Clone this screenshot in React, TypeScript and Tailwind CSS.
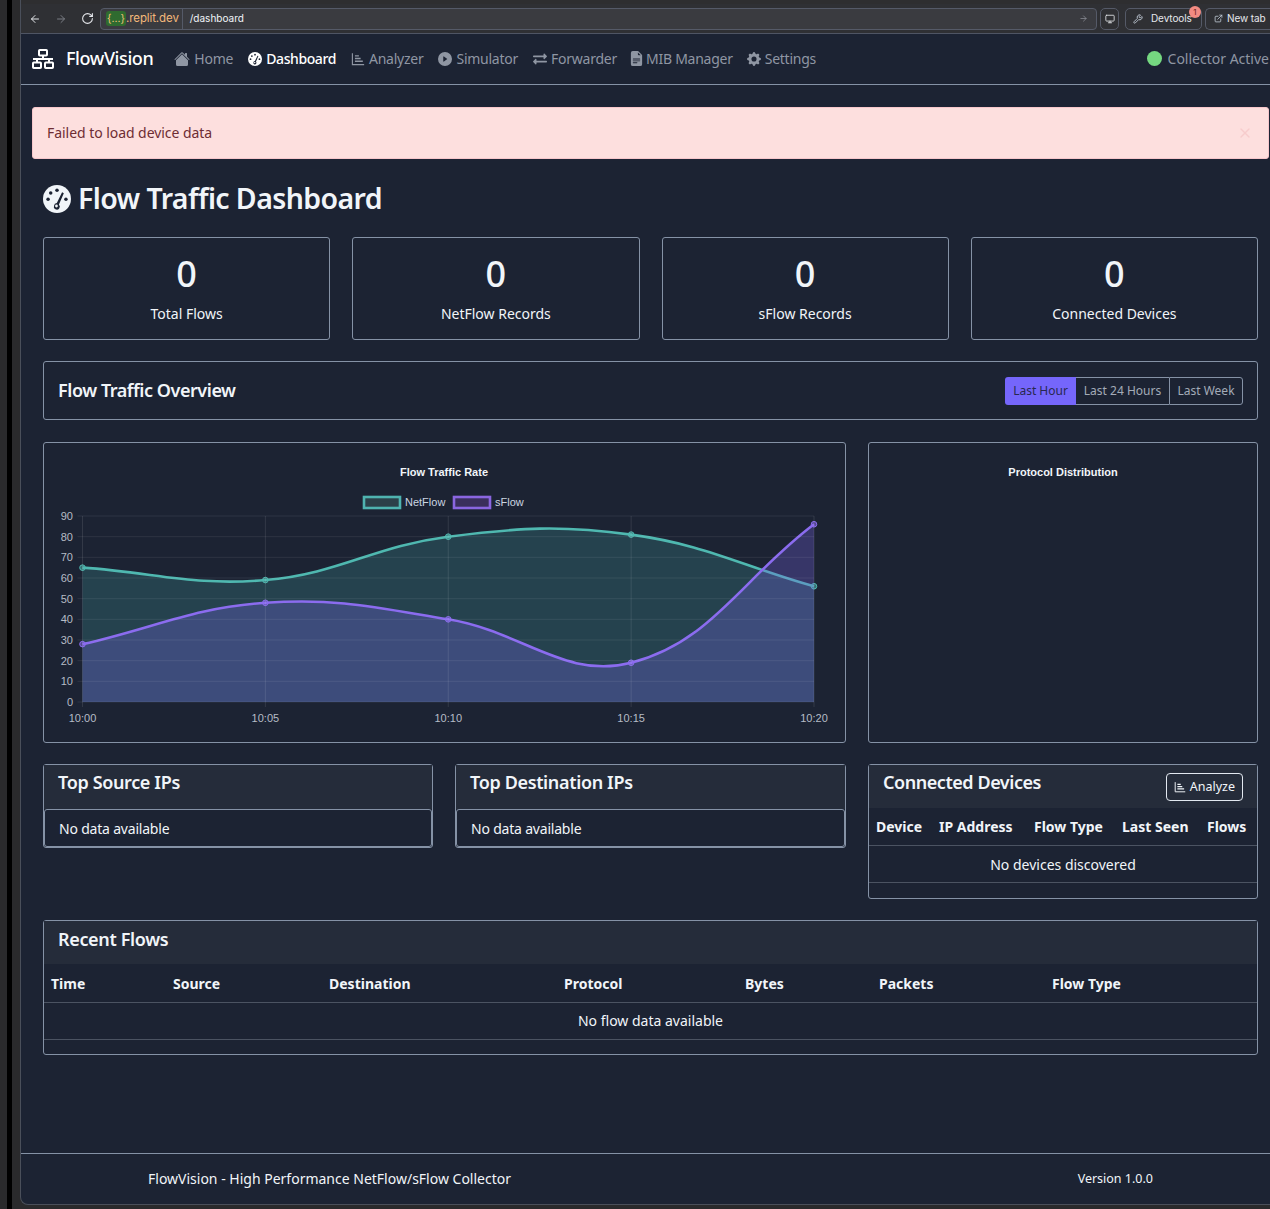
import type { ComponentType, ReactNode } from "react";
import { ArrowLeft, ArrowRight, ExternalLink, Monitor, RotateCw, Wrench, X } from "lucide-react";
import { BsFileEarmarkTextFill, BsGearFill, BsHouseFill, BsPlayCircleFill } from "react-icons/bs";
import { FaExchangeAlt } from "react-icons/fa";

function GaugeIcon({ className }: { className?: string }) {
  return (
    <svg viewBox="0 0 16 16" className={className}>
      <circle cx="8" cy="8" r="8" fill="currentColor" />
      <g fill="#1c2333">
        <circle cx="8" cy="3" r="1" />
        <circle cx="4.4" cy="4.6" r="1" />
        <circle cx="2.9" cy="8.2" r="1" />
        <circle cx="13.1" cy="8.2" r="1" />
        <path d="M10.9 4.2 L11.9 4.7 L9.1 11.2 A1.7 1.7 0 1 1 6.3 11.8 A1.7 1.7 0 0 1 7.9 10.3 Z" />
      </g>
      <circle cx="7.7" cy="12" r="0.8" fill="currentColor" />
    </svg>
  );
}

function StepsIcon({ className }: { className?: string }) {
  return (
    <svg viewBox="0 0 16 16" fill="none" stroke="currentColor" strokeWidth="1.3" className={className}>
      <path d="M1.6 1.5 V14.4 H15" />
      <path d="M4.5 4.4 H9 M4.5 7.4 H11 M4.5 10.6 H13.5" strokeWidth="1.6" />
    </svg>
  );
}

function LogoIcon({ className }: { className?: string }) {
  return (
    <svg viewBox="0 0 22 20" fill="none" stroke="currentColor" strokeWidth="2" className={className}>
      <rect x="7" y="1" width="8" height="5.5" rx="0.8" />
      <rect x="1" y="13.5" width="8" height="5.5" rx="0.8" />
      <rect x="13" y="13.5" width="8" height="5.5" rx="0.8" />
      <path d="M11 6.5 V10 M1 10 H21 M5 10 V13.5 M17 10 V13.5" />
    </svg>
  );
}

const navItems: { icon: ComponentType<{ className?: string }>; label: string; active: boolean; size: string }[] = [
  { icon: BsHouseFill, label: "Home", active: false, size: "h-[16px] w-[16px]" },
  { icon: GaugeIcon, label: "Dashboard", active: true, size: "h-[14px] w-[14px]" },
  { icon: StepsIcon, label: "Analyzer", active: false, size: "h-[14px] w-[14px]" },
  { icon: BsPlayCircleFill, label: "Simulator", active: false, size: "h-[14px] w-[14px]" },
  { icon: FaExchangeAlt, label: "Forwarder", active: false, size: "h-[14px] w-[14px]" },
  { icon: BsFileEarmarkTextFill, label: "MIB Manager", active: false, size: "h-[15px] w-[15px] -ml-[3px] -mr-[2px]" },
  { icon: BsGearFill, label: "Settings", active: false, size: "h-[14px] w-[14px] -ml-px" },
];

const stats = ["Total Flows", "NetFlow Records", "sFlow Records", "Connected Devices"];

const times = ["10:00", "10:05", "10:10", "10:15", "10:20"];
const netflow = [65, 59, 80, 81, 56];
const sflow = [28, 48, 40, 19, 86];

// chart area in svg coordinates
const left = 38.5;
const right = 770;
const top = 73;
const bottom = 259;

const xAt = (i: number) => left + ((right - left) * i) / 4;
const yAt = (v: number) => bottom - ((bottom - top) * v) / 90;

// same bezier the chart lib makes with tension 0.4
function linePath(values: number[]) {
  const pts = values.map((v, i) => ({ x: xAt(i), y: yAt(v) }));
  const ctrl = pts.map((cur, i) => {
    const prev = pts[i - 1] ?? cur;
    const next = pts[i + 1] ?? cur;
    const d01 = Math.hypot(cur.x - prev.x, cur.y - prev.y);
    const d12 = Math.hypot(next.x - cur.x, next.y - cur.y);
    const s01 = d01 / (d01 + d12 || 1);
    const s12 = d12 / (d01 + d12 || 1);
    return {
      px: cur.x - 0.4 * s01 * (next.x - prev.x),
      py: cur.y - 0.4 * s01 * (next.y - prev.y),
      nx: cur.x + 0.4 * s12 * (next.x - prev.x),
      ny: cur.y + 0.4 * s12 * (next.y - prev.y),
    };
  });
  let d = `M${pts[0].x} ${pts[0].y}`;
  for (let i = 1; i < pts.length; i++) {
    d += ` C${ctrl[i - 1].nx} ${ctrl[i - 1].ny} ${ctrl[i].px} ${ctrl[i].py} ${pts[i].x} ${pts[i].y}`;
  }
  return d;
}

function Series({ values, color, fill }: { values: number[]; color: string; fill: string }) {
  const d = linePath(values);
  return (
    <g>
      <path d={`${d} L${right} ${bottom} L${left} ${bottom} Z`} fill={fill} />
      <path d={d} fill="none" stroke={color} strokeWidth="2.6" />
      {values.map((v, i) => (
        <circle key={i} cx={xAt(i)} cy={yAt(v)} r="2.8" fill={color} fillOpacity="0.5" stroke={color} strokeWidth="1" />
      ))}
    </g>
  );
}

function TrafficChart() {
  return (
    <svg width="800" height="298" className="block font-['Liberation_Sans',sans-serif]">
      <text x="400" y="33" textAnchor="middle" fontSize="11" fontWeight="700" fill="#f1f5f9">
        Flow Traffic Rate
      </text>
      <rect x="320" y="54" width="36" height="11" fill="#2c4049" stroke="#4fb3b0" strokeWidth="2.6" />
      <text x="361" y="63" fontSize="11" fill="#cbd5e1">NetFlow</text>
      <rect x="410" y="54" width="36" height="11" fill="#3a2f5c" stroke="#8a66e0" strokeWidth="2.6" />
      <text x="451" y="63" fontSize="11" fill="#cbd5e1">sFlow</text>
      <Series values={netflow} color="#4fb8b0" fill="rgba(75,192,192,0.2)" />
      <Series values={sflow} color="#8b6cef" fill="rgba(120,100,230,0.3)" />
      {[0, 10, 20, 30, 40, 50, 60, 70, 80, 90].map((v) => (
        <g key={v}>
          <line x1={left - 5} x2={right} y1={yAt(v)} y2={yAt(v)} stroke="rgba(255,255,255,0.08)" />
          <text x="29" y={yAt(v) + 4} textAnchor="end" fontSize="11" fill="#b6bcc6">{v}</text>
        </g>
      ))}
      {times.map((t, i) => (
        <g key={t}>
          <line x1={xAt(i)} x2={xAt(i)} y1={top} y2={bottom + 5} stroke="rgba(255,255,255,0.1)" />
          <text x={xAt(i)} y="279" textAnchor="middle" fontSize="11" fill="#b6bcc6">{t}</text>
        </g>
      ))}
    </svg>
  );
}

function ListCard({ title }: { title: string }) {
  return (
    <div className="rounded-[3px] border border-[#8592a6] self-start">
      <div className="h-[44px] bg-[#252c3a] px-[14px] pt-[4px] text-[18px] font-semibold tracking-[-0.35px] text-[#f1f5f9]">{title}</div>
      <div className="h-[38px] rounded-[3px] border border-[#8592a6] px-[14px] pt-[1px] flex items-center text-[14px] tracking-[-0.2px] text-[#f1f5f9]">
        No data available
      </div>
    </div>
  );
}

function Th({ children, className }: { children: ReactNode; className: string }) {
  return <div className={`absolute top-0 h-full flex items-center ${className}`}>{children}</div>;
}

export default function App() {
  return (
    <div className="relative flex h-[1209px] w-[1270px] overflow-hidden bg-[#2a2a2c] font-['Noto_Sans',sans-serif] text-[#f1f5f9]">
      <div className="ml-[7px] w-[5px] shrink-0 bg-black" />
      <div className="w-[8px] shrink-0 bg-[#2a2a2c]" />
      <div className="flex min-w-0 flex-1 flex-col h-[1205px] rounded-bl-[8px] border-l border-b border-[#4a4f5a] bg-[#1c2333] overflow-hidden">
        {/* browser toolbar */}
        <div className="h-[34px] shrink-0 border-b border-[#4f5564] border-t-[4px] border-t-[#2e2e30] bg-[#2f3034] flex items-center font-['Inter',sans-serif]">
          <ArrowLeft className="ml-[8px] h-[12px] w-[12px] shrink-0 text-[#e5e7eb]" />
          <ArrowRight className="ml-[14px] h-[12px] w-[12px] shrink-0 text-[#7a7d84]" />
          <RotateCw className="ml-[14px] h-[13px] w-[13px] shrink-0 text-[#e5e7eb]" />
          <div className="ml-[6px] flex h-[22px] w-[997px] shrink-0 items-center rounded-[4px] border border-[#555a68] bg-[#3a3b40]">
            <span className="ml-[5px] rounded-[3px] bg-[#2f6b2f] px-[1px] text-[10.5px] leading-[15px] text-[#f3c27a]">{"{...}"}</span>
            <span className="text-[11.5px] tracking-[-0.1px] text-[#f3b87a]">.replit.dev</span>
            <div className="ml-[3px] h-full w-px bg-[#555a68]" />
            <span className="ml-[7px] text-[10px] text-[#f1f5f9]">/dashboard</span>
            <ArrowRight className="ml-auto mr-[8px] h-[9px] w-[9px] text-[#8b8e95]" />
          </div>
          <div className="ml-[3px] flex h-[22px] w-[19px] shrink-0 items-center justify-center rounded-[5px] border border-[#555a68]">
            <Monitor className="h-[10px] w-[10px] text-[#e5e7eb]" />
          </div>
          <div className="relative ml-[6px] flex h-[22px] w-[77px] shrink-0 items-center rounded-[5px] border border-[#555a68] pl-[7px]">
            <Wrench className="h-[10px] w-[10px] text-[#cbd5e1]" />
            <span className="ml-[8px] text-[10px] tracking-[-0.1px] text-[#e5e7eb]">Devtools</span>
            <span className="absolute -top-[3px] right-[0px] flex h-[12px] w-[12px] items-center justify-center rounded-full bg-[#f28b82] text-[8px] text-[#6b1d1d]">1</span>
          </div>
          <div className="ml-[3px] flex h-[22px] flex-1 items-center overflow-hidden whitespace-nowrap rounded-l-[5px] border border-r-0 border-[#555a68] pl-[8px]">
            <ExternalLink className="h-[9px] w-[9px] shrink-0 text-[#cbd5e1]" />
            <span className="ml-[4px] text-[10px] tracking-[-0.1px] text-[#e5e7eb]">New tab</span>
          </div>
        </div>

        {/* app nav */}
        <nav className="h-[51px] shrink-0 border-b border-[#8592a6] flex items-center whitespace-nowrap pb-[1px]">
          <LogoIcon className="ml-[11px] h-[20px] w-[22px] shrink-0 text-white" />
          <span className="ml-[12px] mr-[21px] text-[18px] font-medium tracking-[-0.4px] text-white">FlowVision</span>
          <div className="flex items-center gap-[15px]">
            {navItems.map((item) => {
              const Icon = item.icon;
              return (
                <div key={item.label} className={`flex items-center gap-[4px] text-[14px] ${item.active ? "font-medium tracking-[-0.4px] text-white" : "tracking-[-0.25px] text-[#8f96a3]"}`}>
                  <Icon className={item.size} />
                  <span>{item.label}</span>
                </div>
              );
            })}
          </div>
          <div className="ml-auto mr-[1px] flex items-center">
            <span className="h-[15px] w-[15px] rounded-full bg-[#75d881]" />
            <span className="ml-[6px] text-[14px] text-[#8f96a3]">Collector Active</span>
          </div>
        </nav>

        {/* alert runs past the window edge in the screenshot */}
        <div className="ml-[11px] mt-[22px] flex h-[52px] w-[1237px] shrink-0 items-center justify-between rounded-[3px] border border-[#f6c6cb] bg-[#fddfde] pb-[1px] pl-[14px] pr-[15px] text-[14px] tracking-[-0.05px] text-[#6e2d33]">
          <span>Failed to load device data</span>
          <X className="h-[16px] w-[16px] text-[#f7cccc]" />
        </div>

        <div className="ml-[22px] w-[1215px] flex-1 flex flex-col">
          <div className="mt-[21px] flex h-[37px] items-center">
            <GaugeIcon className="h-[28px] w-[28px] text-[#f1f5f9]" />
            <h1 className="ml-[7px] text-[28.5px] font-semibold tracking-[-0.6px] text-[#f1f5f9]">Flow Traffic Dashboard</h1>
          </div>

          <div className="mt-[20px] grid grid-cols-4 gap-[22px]">
            {stats.map((s) => (
              <div key={s} className="flex h-[103px] flex-col items-center rounded-[3px] border border-[#8592a6]">
                <div className="mt-[10px] text-[36px] font-medium leading-[52px]">0</div>
                <div className="mt-[3px] text-[14px] leading-[22px]">{s}</div>
              </div>
            ))}
          </div>

          <div className="mt-[21px] flex h-[59px] items-center justify-between rounded-[3px] border border-[#8592a6] pl-[14px] pr-[14px]">
            <h2 className="text-[18px] font-semibold tracking-[-0.45px]">Flow Traffic Overview</h2>
            <div className="flex h-[28px] text-[12px] text-[#a3abb8]">
              <div className="flex w-[71px] items-center justify-center rounded-l-[3px] bg-[#7566fb] text-[#28284f]">Last Hour</div>
              <div className="flex w-[93px] items-center justify-center border-y border-[#8592a6]">Last 24 Hours</div>
              <div className="flex w-[74px] items-center justify-center rounded-r-[3px] border border-[#8592a6]">Last Week</div>
            </div>
          </div>

          <div className="mt-[22px] flex justify-between">
            <div className="h-[301px] w-[803px] rounded-[3px] border border-[#8592a6]">
              <TrafficChart />
            </div>
            <div className="h-[301px] w-[390px] rounded-[3px] border border-[#8592a6] pt-[21px] text-center font-['Liberation_Sans',sans-serif] text-[11px] font-bold leading-[16px]">
              Protocol Distribution
            </div>
          </div>

          <div className="mt-[21px] grid grid-cols-[390px_391px_390px] gap-x-[22px]">
            <ListCard title="Top Source IPs" />
            <ListCard title="Top Destination IPs" />
            <div className="h-[135px] rounded-[3px] border border-[#8592a6]">
              <div className="flex h-[43px] justify-between bg-[#252c3a] pl-[14px] pr-[14px]">
                <span className="pt-[4px] text-[18px] font-semibold tracking-[-0.45px]">Connected Devices</span>
                <button className="mt-[8px] flex h-[28px] items-center gap-[4px] rounded-[4px] border border-[#e2e8f0] px-[7px] text-[12.5px]">
                  <StepsIcon className="h-[12px] w-[12px]" />
                  Analyze
                </button>
              </div>
              <div className="relative h-[38px] border-b border-[#4b5362] pt-[1px] text-[14px] font-bold">
                <Th className="left-[7px]">Device</Th>
                <Th className="left-[70px]">IP Address</Th>
                <Th className="left-[165px]">Flow Type</Th>
                <Th className="left-[253px]">Last Seen</Th>
                <Th className="left-[338px]">Flows</Th>
              </div>
              <div className="flex h-[37px] items-center justify-center border-b border-[#4b5362] text-[14px]">No devices discovered</div>
            </div>
          </div>

          <div className="mt-[21px] h-[135px] rounded-[3px] border border-[#8592a6]">
            <div className="flex h-[43px] items-center bg-[#252c3a] pb-[6px] pl-[14px] text-[18px] font-semibold tracking-[-0.35px]">Recent Flows</div>
            <div className="relative h-[39px] border-b border-[#4b5362] text-[14px] font-bold">
              <Th className="left-[7px]">Time</Th>
              <Th className="left-[129px]">Source</Th>
              <Th className="left-[285px]">Destination</Th>
              <Th className="left-[520px]">Protocol</Th>
              <Th className="left-[701px]">Bytes</Th>
              <Th className="left-[835px]">Packets</Th>
              <Th className="left-[1008px]">Flow Type</Th>
            </div>
            <div className="flex h-[37px] items-center justify-center border-b border-[#4b5362] pb-[2px] text-[14px]">No flow data available</div>
          </div>
        </div>

        <footer className="h-[51px] shrink-0 border-t border-[#8592a6] flex items-center justify-between pl-[127px] pr-[117px] text-[14px]">
          <span className="pb-[2px]">FlowVision - High Performance NetFlow/sFlow Collector</span>
          <span className="text-[12.5px]">Version 1.0.0</span>
        </footer>
      </div>
    </div>
  );
}
